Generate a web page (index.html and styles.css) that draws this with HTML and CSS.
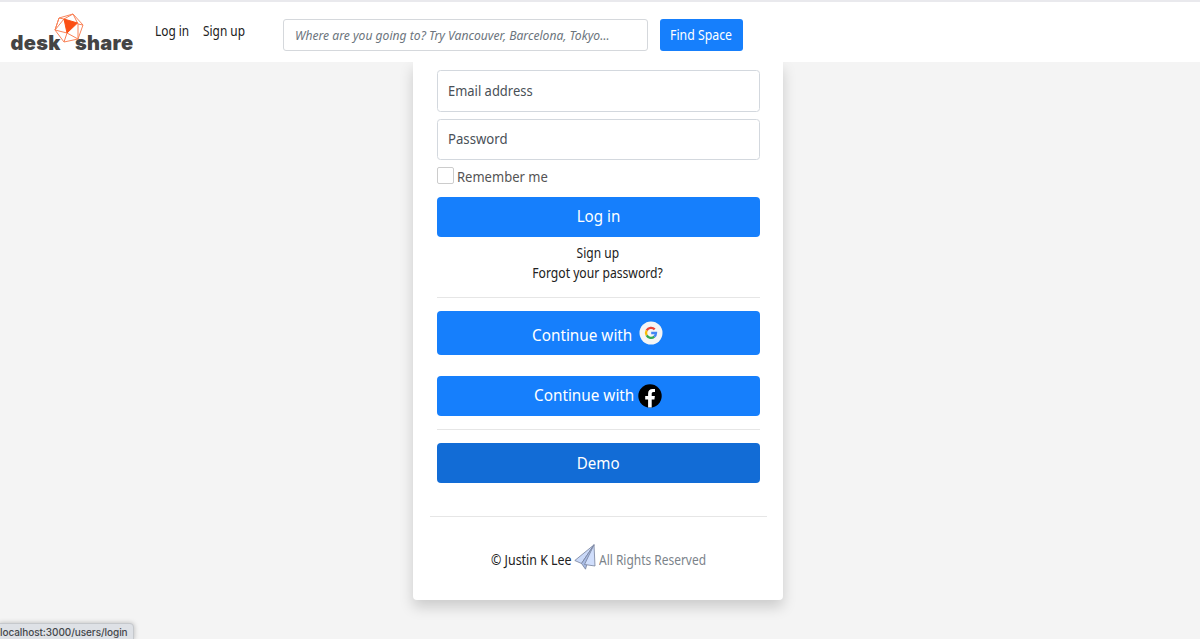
FILE: index.html
```html
<!DOCTYPE html>
<html lang="en">
<head>
<meta charset="utf-8">
<title>DeskShare</title>
<link rel="stylesheet" href="styles.css">
</head>
<body>
<header class="navbar">
  <a class="brand"><span class="brand-desk">desk</span><svg class="brand-mark" width="30" height="30" viewBox="0 0 30 30" fill="none" stroke="#f98359" stroke-width="1"><path d="M5 5 19 1 29 12 24 26 10 29 1 17ZM5 5 10 6 19 1 24 11 29 12M10 6 1 17 13 20 10 29M24 11 24 26 13 20M1 17 5 5"/><path d="M10 6 23.500 10 13 20Z" fill="#fb4f14" stroke="#fb4f14"/></svg><span class="brand-share">share</span></a>
  <nav class="links"><a class="t-nav-login">Log in</a><a class="t-nav-sign">Sign up</a></nav>
  <div class="search"><span class="t-search">Where are you going to? Try Vancouver, Barcelona, Tokyo…</span></div>
  <div class="find"><span class="t-find">Find Space</span></div>
</header>
<main class="card">
  <div class="field"><span class="t-email">Email address</span></div>
  <div class="field"><span class="t-pass">Password</span></div>
  <label class="remember"><i class="box"></i><span class="t-remember">Remember me</span></label>
  <div class="btn login"><span class="t-login">Log in</span></div>
  <div class="help"><a class="t-sign">Sign up</a><a class="t-forgot">Forgot your password?</a></div>
  <div class="rule"></div>
  <div class="btn google"><span class="t-cont">Continue with</span><svg width="24" height="24" viewBox="0 0 24 24"><circle cx="12" cy="12" r="11.500" fill="#f5f5f5"/><g fill="none" stroke-width="2.300"><path d="M7.700 9.400A5 5 0 0 1 15.700 8.400" stroke="#ea4335"/><path d="M7.700 9.400A5 5 0 0 0 7.700 14.400" stroke="#fbbc05"/><path d="M7.700 14.400A5 5 0 0 0 15.300 15.700" stroke="#34a853"/><path d="M15.300 15.700A5 5 0 0 0 17 12H12.200" stroke="#4285f4"/></g></svg></div>
  <div class="btn facebook"><span class="t-cont">Continue with</span><svg width="24" height="24" viewBox="0 0 24 24"><circle cx="12" cy="12" r="11.700" fill="#000"/><path d="M10.100 23.500V15.400H7.200V12H10.100V9.500C10.100 6.500 11.800 4.900 14.500 4.900 15.700 4.900 17 5.100 17 5.100V8H15.500C14.100 8 13.700 8.900 13.700 9.800V12H16.900L16.400 15.400H13.700V23.500Z" fill="#fff"/></svg></div>
  <div class="rule"></div>
  <div class="btn demo"><span class="t-demo">Demo</span></div>
  <footer class="footer"><span class="t-name">© Justin K Lee</span><svg width="22" height="26" viewBox="0 0 22 26" stroke="#76819c" stroke-width=".8" stroke-linejoin="round"><path d="M20 .8 .8 16.500 7.500 19.500Z" fill="#cad9f8"/><path d="M20 .8 7.500 19.500 11.500 25.200 13 20Z" fill="#a9bce6"/><path d="M20 .8 10.500 20.500 21 22Z" fill="#d0defc"/></svg><span class="t-rights">All Rights Reserved</span></footer>
</main>
<div class="status"><span>localhost:3000/users/login</span></div>
</body>
</html>
```
FILE: styles.css
```css
* { box-sizing: border-box; }
body {
  margin: 0;
  height: 639px;
  overflow: hidden;
  background: #f4f4f4;
  color: #212121;
  font: 13.5px/20px "Noto Sans", sans-serif;
}
span, a { white-space: nowrap; }
.navbar {
  position: relative;
  z-index: 1;
  display: flex;
  height: 62px;
  background: #fff;
  border-top: 2px solid #e9e9ed;
}
.brand {
  display: flex;
  width: 155px;
  padding: 11px 0 0 10.5px;
  color: #444;
  font: 900 20px/24px Inter, sans-serif;
  letter-spacing: .3px;
}
.brand-desk { width: 43.5px; margin-top: 18px; }
.brand-share { margin-top: 18px; margin-left: -9px; }
.brand-mark { flex: none; }
.links { display: flex; width: 128px; padding-top: 19px; }
.search {
  display: flex;
  align-items: center;
  width: 365px;
  height: 32px;
  margin: 17px 12px 0 0;
  padding-left: 11px;
  border: 1px solid #d5d8dc;
  border-radius: 3px;
  color: #6c757d;
  font-size: 13px;
  font-style: italic;
}
.find {
  display: flex;
  align-items: center;
  justify-content: center;
  width: 83px;
  height: 32px;
  margin-top: 17px;
  background: #167ffc;
  border-radius: 3px;
  color: #fff;
}
.card {
  width: 370px;
  height: 538px;
  margin-left: 413px;
  padding: 8px 23.5px 0;
  background: #fff;
  border-radius: 0 0 4px 4px;
  box-shadow: 0 7px 14px rgba(0, 0, 0, .17);
}
.field {
  display: flex;
  align-items: center;
  height: 41.5px;
  margin-bottom: 7px;
  padding-left: 10.5px;
  border: 1px solid #d3d8de;
  border-radius: 3.5px;
  color: #495057;
  font-size: 14px;
}
.remember { display: flex; gap: 3px; height: 30px; color: #545454; font-size: 14px; }
.box { width: 17px; height: 17px; border: 1px solid #ccc; border-radius: 2px; }
.btn {
  display: flex;
  align-items: center;
  justify-content: center;
  height: 40px;
  background: #167ffc;
  border-radius: 4px;
  color: #fff;
  font-size: 17px;
}
.login { padding-bottom: 2px; }
.help { display: flex; flex-direction: column; align-items: center; height: 60px; padding-top: 6px; }
.rule { height: 1px; background: #e6e6e6; margin-bottom: 13px; }
.google { height: 44px; gap: 7px; margin-bottom: 21px; padding-right: 2px; }
.google span { padding-top: 3px; }
.facebook { gap: 4.5px; margin-bottom: 13px; }
.facebook span { padding-bottom: 2px; }
.demo { background: #126cd6; padding-bottom: 1px; }
.footer {
  display: flex;
  align-items: center;
  justify-content: center;
  gap: 3px;
  height: 84px;
  margin: 33px -7px 0;
  border-top: 1px solid #e6e6e6;
}
.footer span { padding-top: 2px; }
.footer svg { margin-bottom: 4px; }
.t-rights { color: #7b838a; }

.t-nav-login, .t-nav-sign, .t-search, .t-email, .t-pass, .t-remember, .t-cont, .t-name, .t-rights { transform-origin: left; }
.t-nav-login { width: 48px; transform: scaleX(.88); }
.t-nav-sign { transform: scaleX(.88); }
.t-search { transform: scaleX(.933); }
.t-email { transform: scaleX(.925); }
.t-pass { transform: scaleX(.94); }
.t-remember { transform: scaleX(.93); }
.t-find { transform: scaleX(.91); }
.t-login, .t-demo { transform: scaleX(.89); }
.t-sign { transform: scaleX(.89); }
.t-forgot { transform: scaleX(.9); }
.t-cont { width: 100px; transform: scaleX(.9); }
.t-name { width: 80px; transform: scaleX(.92); }
.t-rights { width: 107px; transform: scaleX(.885); }

.status {
  position: absolute;
  left: -1px;
  bottom: -1px;
  width: 135px;
  height: 17px;
  background: #dee1e6;
  border: 1px solid #c5c8cc;
  border-radius: 0 4px 0 0;
  box-shadow: 0 0 5px rgba(0, 0, 0, .25);
  color: #45484c;
  font: 500 10px/17px Inter, sans-serif;
  letter-spacing: -.07px;
}
```
